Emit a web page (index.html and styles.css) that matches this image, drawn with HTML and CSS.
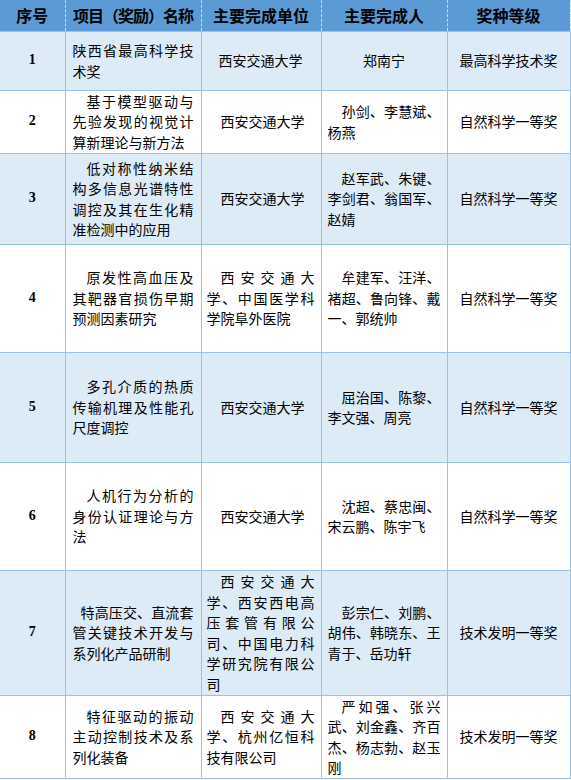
FILE: index.html
```html
<!DOCTYPE html>
<html lang="zh-CN">
<head>
<meta charset="utf-8">
<title>奖项列表</title>
<link rel="stylesheet" href="styles.css">
</head>
<body>
<table class="awards">
  <colgroup>
    <col class="c-no">
    <col class="c-name">
    <col class="c-unit">
    <col class="c-person">
    <col class="c-level">
  </colgroup>
  <thead>
    <tr class="head">
      <th>序号</th>
      <th class="tight">项目（奖励）名称</th>
      <th>主要完成单位</th>
      <th>主要完成人</th>
      <th>奖种等级</th>
    </tr>
  </thead>
  <tbody>
    <tr class="alt h1">
      <td class="no">1</td>
      <td class="txt noindent">陕西省最高科学技术奖</td>
      <td class="ctr">西安交通大学</td>
      <td class="ctr">郑南宁</td>
      <td class="ctr">最高科学技术奖</td>
    </tr>
    <tr class="h2">
      <td class="no">2</td>
      <td class="txt">基于模型驱动与先验发现的视觉计算新理论与新方法</td>
      <td class="txt">西安交通大学</td>
      <td class="txt">孙剑、李慧斌、杨燕</td>
      <td class="ctr">自然科学一等奖</td>
    </tr>
    <tr class="alt h3">
      <td class="no">3</td>
      <td class="txt">低对称性纳米结构多信息光谱特性调控及其在生化精准检测中的应用</td>
      <td class="txt">西安交通大学</td>
      <td class="txt">赵军武、朱键、李剑君、翁国军、赵婧</td>
      <td class="ctr">自然科学一等奖</td>
    </tr>
    <tr class="h4">
      <td class="no">4</td>
      <td class="txt">原发性高血压及其靶器官损伤早期预测因素研究</td>
      <td class="txt">西安交通大学、中国医学科学院阜外医院</td>
      <td class="txt">牟建军、汪洋、褚超、鲁向锋、戴一、郭统帅</td>
      <td class="ctr">自然科学一等奖</td>
    </tr>
    <tr class="alt h5">
      <td class="no">5</td>
      <td class="txt">多孔介质的热质传输机理及性能孔尺度调控</td>
      <td class="txt">西安交通大学</td>
      <td class="txt">屈治国、陈黎、李文强、周亮</td>
      <td class="ctr">自然科学一等奖</td>
    </tr>
    <tr class="h6">
      <td class="no">6</td>
      <td class="txt">人机行为分析的身份认证理论与方法</td>
      <td class="txt">西安交通大学</td>
      <td class="txt">沈超、蔡忠闽、宋云鹏、陈宇飞</td>
      <td class="ctr">自然科学一等奖</td>
    </tr>
    <tr class="alt h7">
      <td class="no">7</td>
      <td class="txt small-indent">特高压交、直流套管关键技术开发与系列化产品研制</td>
      <td class="txt">西安交通大学、西安西电高压套管有限公司、中国电力科学研究院有限公司</td>
      <td class="txt">彭宗仁、刘鹏、胡伟、韩晓东、王青于、岳功轩</td>
      <td class="ctr">技术发明一等奖</td>
    </tr>
    <tr class="h8">
      <td class="no">8</td>
      <td class="txt">特征驱动的振动主动控制技术及系列化装备</td>
      <td class="txt">西安交通大学、杭州亿恒科技有限公司</td>
      <td class="txt">严如强、张兴武、刘金鑫、齐百杰、杨志勃、赵玉刚</td>
      <td class="ctr">技术发明一等奖</td>
    </tr>
  </tbody>
</table>
</body>
</html>
```
FILE: styles.css
```css
html, body {
  margin: 0;
  padding: 0;
  background: #ffffff;
}

.awards {
  border-collapse: collapse;
  table-layout: fixed;
  width: 570px;
  font-family: "Noto Sans CJK SC", "Noto Sans", sans-serif;
  font-size: 14px;
  line-height: 20.5px;
  color: #000000;
}

.c-no { width: 65px; }
.c-name { width: 136px; }
.c-unit { width: 120px; }
.c-person { width: 126px; }
.c-level { width: 123px; }

.awards th,
.awards td {
  border: 1px solid #9bc2e6;
  vertical-align: middle;
  padding: 0;
}

.awards tr > :first-child {
  border-left: none;
}

.head {
  height: 31px;
  background: #5b9bd5;
}

.head th {
  border-top: none;
  border-left: 1px dashed #c6dbf0;
  border-right: 1px dashed #c6dbf0;
  font-size: 16px;
  font-weight: 700;
  white-space: nowrap;
  text-align: center;
  color: #000000;
}

.head th.tight {
  letter-spacing: -1px;
}

.alt { background: #ddebf7; }

.h1 { height: 59px; }
.h2 { height: 63px; }
.h3 { height: 91px; }
.h4 { height: 108px; }
.h5 { height: 110px; }
.h6 { height: 108px; }
.h7 { height: 125px; }
.h8 { height: 83px; }

.awards td.no {
  text-align: center;
  font-family: "Liberation Serif", "DejaVu Serif", serif;
  font-weight: 700;
  font-size: 14px;
}

.awards td.txt {
  text-align: justify;
  text-indent: 1em;
}

.awards td.noindent {
  text-indent: 0;
}

.awards td.small-indent {
  text-indent: 8px;
}

.awards td.ctr {
  text-align: center;
}

.awards td:nth-child(2) { padding: 0 7px 0 7px; }
.awards td:nth-child(3) { padding: 0 6px 0 5px; }
.awards td:nth-child(4) { padding: 0 6px 0 6px; }
.awards td:nth-child(5) { padding: 0 4px; }
```
